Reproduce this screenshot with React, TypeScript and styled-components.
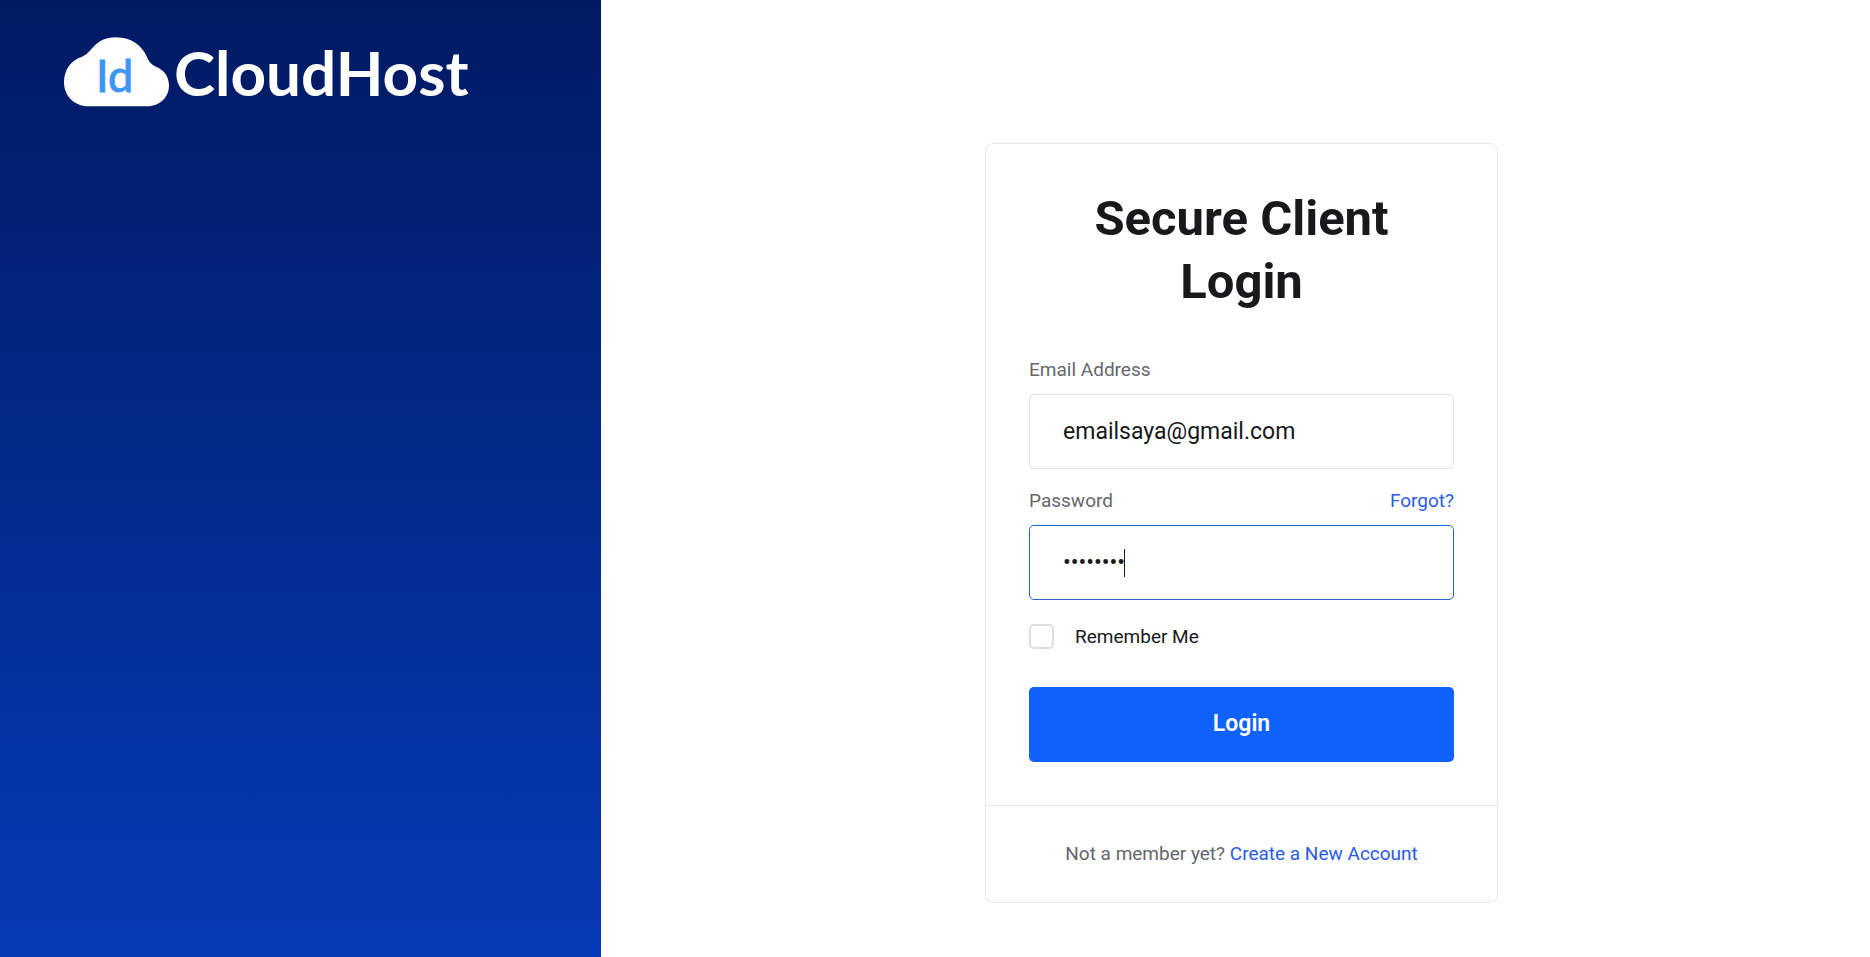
import React from "react";
import styled, { createGlobalStyle } from "styled-components";

const GlobalStyle = createGlobalStyle`
  *, *::before, *::after { box-sizing: border-box; }
  body {
    margin: 0;
    background: #fff;
    color: #18191b;
    font-family: Roboto, "Liberation Sans", sans-serif;
    font-size: 19px;
    line-height: 28px;
  }
`;

const Page = styled.div`
  display: grid;
  grid-template-columns: 9fr 19fr;
  min-height: 100vh;
`;

const BrandPanel = styled.aside`
  padding: 37px 64px;
  background: linear-gradient(180deg, #001a62 0%, #063ab6 100%);
`;

const HomeLink = styled.a`
  display: block;
  width: fit-content;
`;

const LogoSvg = styled.svg`
  display: block;
  overflow: visible;
  font-family: Lato, "Open Sans", sans-serif;
`;

const Main = styled.main`
  display: flex;
  align-items: center;
  justify-content: center;
  padding: 96px 12px 8px 24px;
`;

const Card = styled.section`
  width: 100%;
  max-width: 513px;
  border: 1px solid #e9e9ea;
  border-radius: 8px;
`;

const LoginForm = styled.form`
  display: flex;
  flex-direction: column;
  padding: 43px;
`;

const Title = styled.h1`
  margin: 0 0 43px;
  padding: 0 40px;
  font-size: 49px;
  line-height: 63px;
  font-weight: 700;
  text-align: center;
`;

const Field = styled.div`
  display: flex;
  flex-direction: column;
  gap: 10px;
  margin-bottom: 18px;
`;

const LabelRow = styled.div`
  display: flex;
  justify-content: space-between;
`;

const FieldLabel = styled.label`
  color: #65666c;
`;

const TextLink = styled.a`
  color: #2a5bea;
  text-decoration: none;
`;

const InputBox = styled.div`
  position: relative;
  display: grid;
`;

const TextInput = styled.input`
  width: 100%;
  height: 75px;
  padding: 0 33px;
  border: 1px solid #e0e1e3;
  border-radius: 5px;
  background: #fff;
  color: #18191b;
  font: inherit;
  font-size: 23px;
  outline: none;
  &:focus { border-color: #2a62cc; }
`;

const PasswordInput = styled(TextInput)`
  caret-color: transparent;
`;

const Caret = styled.span`
  position: absolute;
  top: 24px;
  left: 95px;
  width: 1px;
  height: 28px;
  background: #18191b;
  pointer-events: none;
`;

const Remember = styled.label`
  display: flex;
  align-items: center;
  gap: 21px;
  margin: 5px 0 36px;
`;

const Checkbox = styled.input`
  appearance: none;
  width: 25px;
  height: 25px;
  margin: 0;
  border: 2px solid #dedede;
  border-radius: 5px;
  background: #fff;
  &:checked { background: #0f62fe; border-color: #0f62fe; }
`;

const SubmitButton = styled.button`
  height: 75px;
  border: 0;
  border-radius: 5px;
  background: #0f62fe;
  color: #fff;
  font: inherit;
  font-size: 23px;
  font-weight: 600;
  cursor: pointer;
`;

const CardFooter = styled.footer`
  padding: 34px 43px;
  border-top: 1px solid #e9e9ea;
  color: #65666c;
  text-align: center;
`;

function Logo() {
  return (
    <LogoSvg width="403" height="70" viewBox="0 0 403 70" role="img" aria-label="IdCloudHost">
      <svg width="105" height="70" viewBox="72 50 315 210">
        <path
          fill="#fff"
          d="M145 258C102 258 72 226 72 186C72 146 95 119 126 109C158 98 162 51 228 51C276 51 304 76 320 108C328 128 336 134 348 139C371 148 387 168 387 195C387 232 359 258 322 258Z"
        />
      </svg>
      <text x="32" y="55" fontSize="45" fill="#3b96f5" stroke="#3b96f5">Id</text>
      <text x="110" y="59" fontSize="62" fontWeight="700" fill="#fff">CloudHost</text>
    </LogoSvg>
  );
}

export default function App() {
  return (
    <Page>
      <GlobalStyle />
      <BrandPanel>
        <HomeLink href="#"><Logo /></HomeLink>
      </BrandPanel>
      <Main>
        <Card>
          <LoginForm onSubmit={(e) => e.preventDefault()}>
            <Title>Secure Client Login</Title>
            <Field>
              <FieldLabel htmlFor="email">Email Address</FieldLabel>
              <TextInput id="email" type="email" defaultValue="emailsaya@gmail.com" />
            </Field>
            <Field>
              <LabelRow>
                <FieldLabel htmlFor="password">Password</FieldLabel>
                <TextLink href="#forgot">Forgot?</TextLink>
              </LabelRow>
              <InputBox>
                <PasswordInput id="password" type="password" defaultValue="password" autoFocus />
                <Caret aria-hidden="true" />
              </InputBox>
            </Field>
            <Remember>
              <Checkbox type="checkbox" />
              Remember Me
            </Remember>
            <SubmitButton type="submit">Login</SubmitButton>
          </LoginForm>
          <CardFooter>
            Not a member yet? <TextLink href="#register">Create a New Account</TextLink>
          </CardFooter>
        </Card>
      </Main>
    </Page>
  );
}
